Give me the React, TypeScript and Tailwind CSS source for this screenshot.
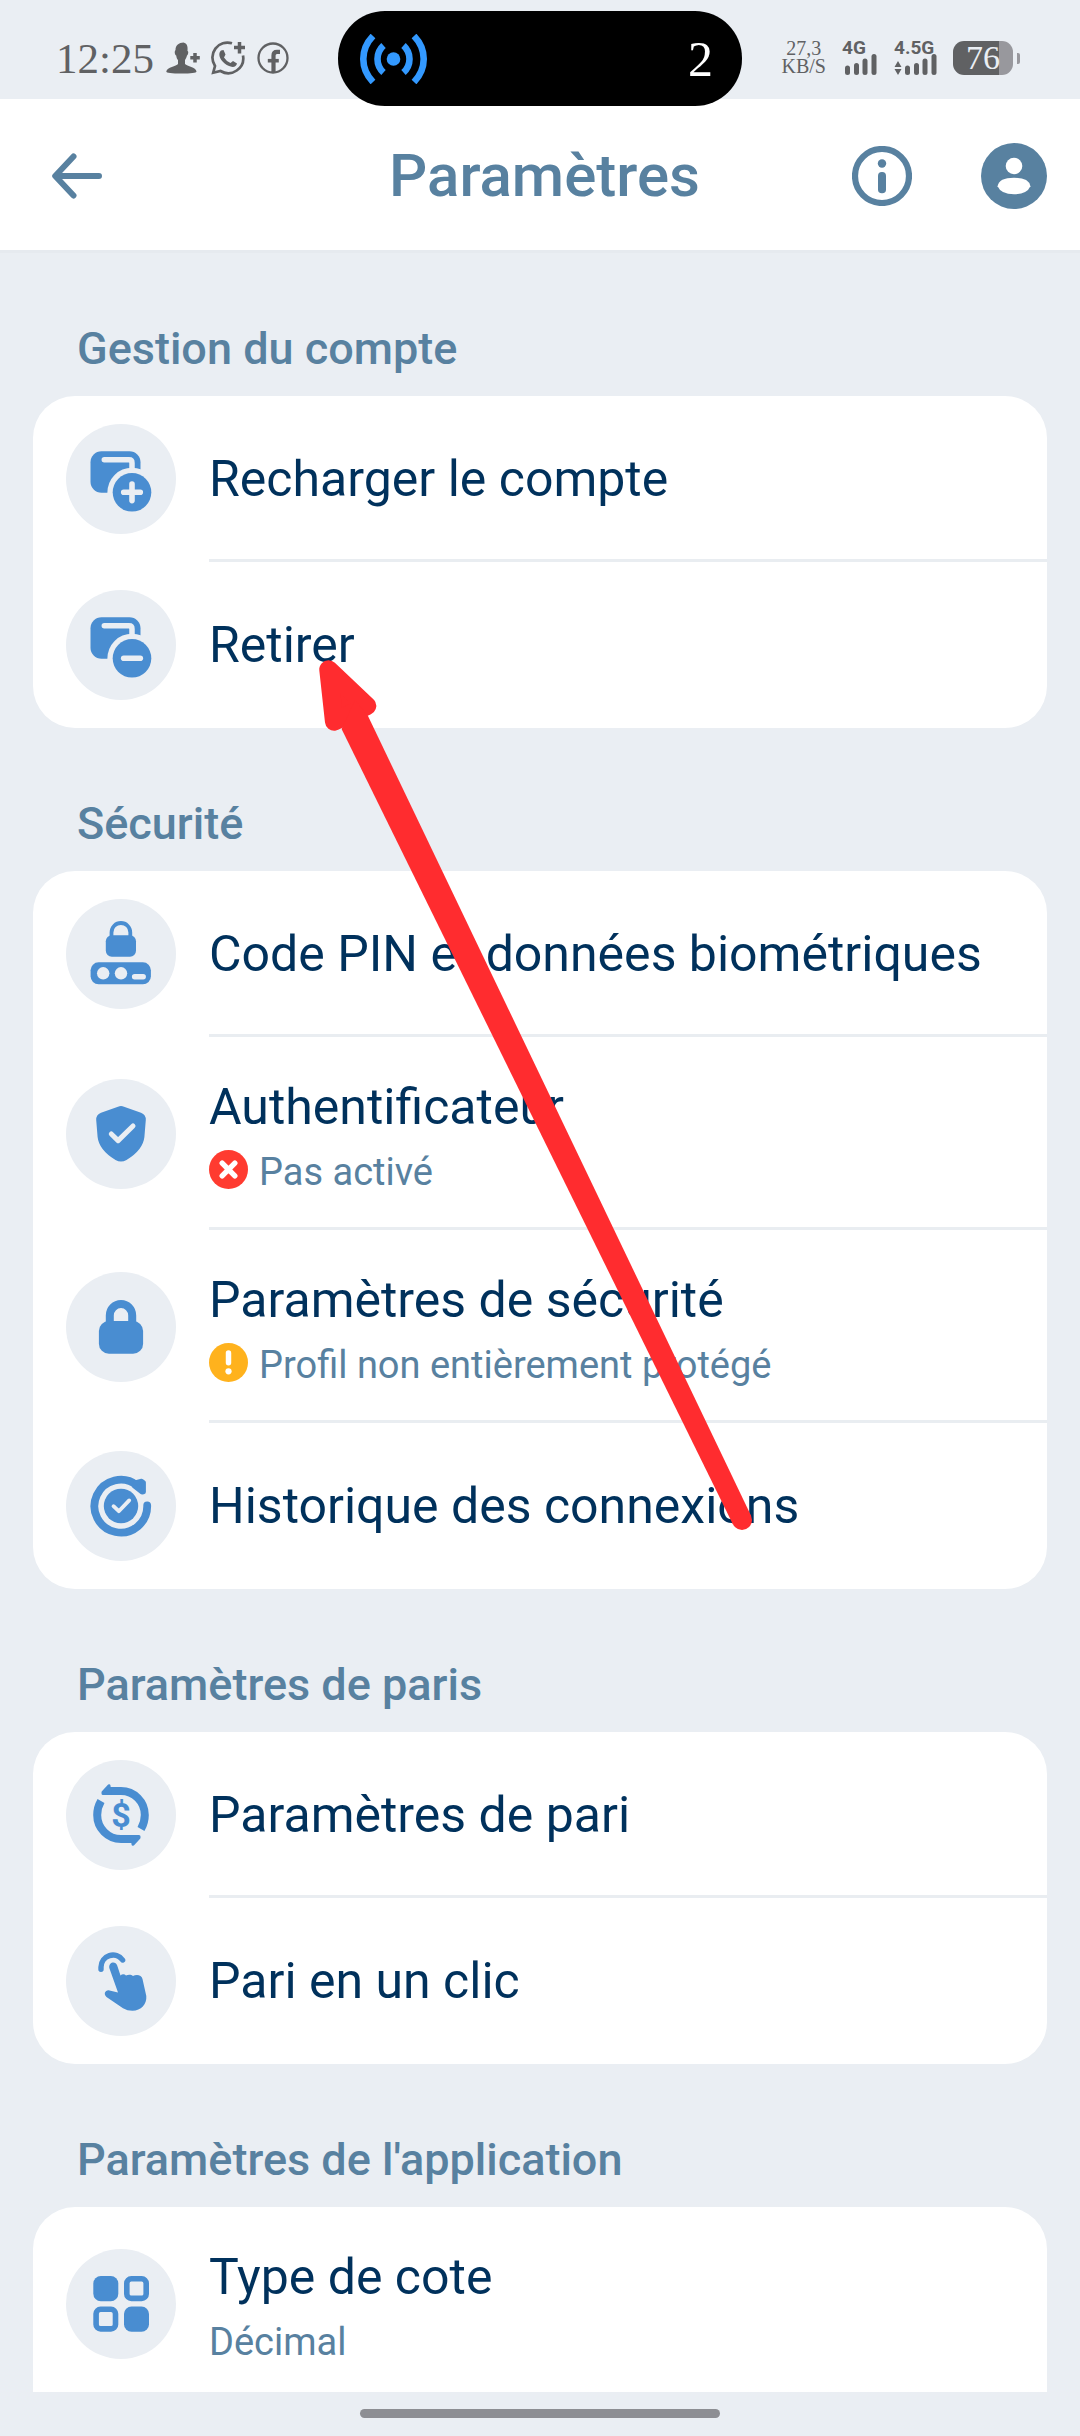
import type { ReactNode } from "react";

type Status = "error" | "warning";

type Item = {
  title: string;
  icon: ReactNode;
  subtitle?: string;
  status?: Status;
};

type Group = {
  heading: string;
  items: Item[];
  // the list goes on below the fold
  open?: boolean;
};

const BLUE = "#498dd1";
const DISC = "#eaeef3";

function WalletIcon({ minus = false }: { minus?: boolean }) {
  return (
    <svg viewBox="0 0 110 110" className="size-full" fill={BLUE}>
      <rect x="24.5" y="27.3" width="50" height="41.4" rx="11" />
      <path
        d="M38.3 35.8H63Q66 35.8 66 39V48"
        fill="none"
        stroke={DISC}
        strokeWidth="5.5"
        strokeLinecap="round"
      />
      <circle cx="66" cy="68.3" r="24.6" fill={DISC} />
      <circle cx="66" cy="68.3" r="19.3" />
      <path
        d={minus ? "M57.7 68.3H74.3" : "M57.7 68.3H74.3M66 60V76.6"}
        stroke={DISC}
        strokeWidth="5.6"
        strokeLinecap="round"
      />
    </svg>
  );
}

function PinIcon() {
  return (
    <svg viewBox="0 0 110 110" className="size-full" fill={BLUE}>
      <path d="M45.5 38V33.4A9.4 9.4 0 0 1 64.3 33.4V38" fill="none" stroke={BLUE} strokeWidth="3.8" />
      <rect x="39.8" y="36.3" width="30.2" height="21.4" rx="6" />
      <rect x="24.6" y="63.3" width="60.3" height="22" rx="8" />
      <g fill={DISC}>
        <circle cx="37.2" cy="74.3" r="6.2" />
        <circle cx="55" cy="74.3" r="6.2" />
        <rect x="65.9" y="75" width="14" height="5.4" rx="2.7" />
      </g>
    </svg>
  );
}

function ShieldIcon() {
  return (
    <svg viewBox="0 0 110 110" className="size-full" fill={BLUE}>
      <path d="M52 27.7Q55 26.4 58 27.7L75 33.8Q80 35.8 79.8 41L78.4 58Q77 71 60.5 81Q55 84.2 49.5 81Q33 71 31.6 58L30.2 41Q30 35.8 35 33.8Z" />
      <path
        d="M45.3 55L52.1 61.6L67 47"
        fill="none"
        stroke={DISC}
        strokeWidth="5"
        strokeLinecap="round"
        strokeLinejoin="round"
      />
    </svg>
  );
}

function LockIcon() {
  return (
    <svg viewBox="0 0 110 110" className="size-full" fill={BLUE}>
      <path d="M43.8 52V43.4A11.2 11.4 0 0 1 66.2 43.4V52" fill="none" stroke={BLUE} strokeWidth="8" />
      <rect x="32.9" y="49" width="44.2" height="32.8" rx="10" />
    </svg>
  );
}

function HistoryIcon() {
  return (
    <svg viewBox="0 0 110 110" className="size-full" fill={BLUE}>
      <path
        d="M81.2 54.5A26.4 26.4 0 1 1 71 34.3"
        fill="none"
        stroke={BLUE}
        strokeWidth="7.8"
        strokeLinecap="round"
      />
      <path
        d="M70 31.5L75.6 30L77.6 31.5V41L76 41.2L68 35Z"
        stroke={BLUE}
        strokeWidth="4.6"
        strokeLinejoin="round"
      />
      <circle cx="55" cy="55" r="17.2" />
      <path
        d="M47.5 55.2L52.8 60.2L63.2 49.4"
        fill="none"
        stroke={DISC}
        strokeWidth="3.8"
        strokeLinecap="round"
        strokeLinejoin="round"
      />
    </svg>
  );
}

function CoinIcon() {
  return (
    <svg viewBox="0 0 110 110" className="size-full" fill={BLUE}>
      {[0, 180].map((angle) => (
        <g key={angle} transform={`rotate(${angle} 55 55)`}>
          <path d="M40 31H55A23.8 24 0 0 1 78.8 55Q78.8 62.5 75 69" fill="none" stroke={BLUE} strokeWidth="8" />
          <path d="M43 25.8L37 32.2V33.5H44Z" stroke={BLUE} strokeWidth="3" strokeLinejoin="round" />
        </g>
      ))}
      <text
        x="55"
        y="66.5"
        textAnchor="middle"
        fontFamily="Roboto, sans-serif"
        fontSize="34"
        fontWeight="700"
      >
        $
      </text>
    </svg>
  );
}

function TapIcon() {
  return (
    <svg viewBox="0 0 110 110" className="size-full" fill={BLUE}>
      <path
        d="M35 43.3V41A12 12.3 0 0 1 56.6 34"
        fill="none"
        stroke={BLUE}
        strokeWidth="5.4"
        strokeLinecap="round"
      />
      <path d="M43.3 42C42.3 36 49.7 34.5 51.2 39.5L54.5 49.5C56 47.8 58.5 47.8 60 49.5C62 48.3 65.5 48.3 67 50C70 48.3 75.7 48.5 76.5 53L80.3 70C81 78 75 84.8 66.5 84.8C63 84.8 60 84 57 82.3L40.5 71C37 68 39.5 63.5 43.5 64.5L52 66.5Z" />
    </svg>
  );
}

function GridIcon() {
  return (
    <svg viewBox="0 0 110 110" className="size-full" fill={BLUE}>
      <rect x="27.3" y="27" width="25" height="25.2" rx="7.5" />
      <rect x="58" y="57.5" width="25" height="25.2" rx="7.5" />
      <g fill="none" stroke={BLUE} strokeWidth="5.6">
        <rect x="60.8" y="29.8" width="19.4" height="19.6" rx="4.5" />
        <rect x="30.1" y="60.3" width="19.4" height="19.6" rx="4.5" />
      </g>
    </svg>
  );
}

function StatusBadge({ status }: { status: Status }) {
  return (
    <svg viewBox="0 0 40 40" className="size-[39px] shrink-0">
      <circle cx="20" cy="20" r="20" fill={status === "error" ? "#ff3b30" : "#ffb21d"} />
      {status === "error" ? (
        <path
          d="M13.5 13.5L26.5 26.5M26.5 13.5L13.5 26.5"
          stroke="#fff"
          strokeWidth="5.5"
          strokeLinecap="round"
        />
      ) : (
        <g fill="#fff">
          <rect x="17.2" y="7.5" width="5.6" height="15.5" rx="2.8" />
          <circle cx="20" cy="29" r="3.2" />
        </g>
      )}
    </svg>
  );
}

const groups: Group[] = [
  {
    heading: "Gestion du compte",
    items: [
      { title: "Recharger le compte", icon: <WalletIcon /> },
      { title: "Retirer", icon: <WalletIcon minus /> },
    ],
  },
  {
    heading: "Sécurité",
    items: [
      { title: "Code PIN et données biométriques", icon: <PinIcon /> },
      { title: "Authentificateur", subtitle: "Pas activé", status: "error", icon: <ShieldIcon /> },
      {
        title: "Paramètres de sécurité",
        subtitle: "Profil non entièrement protégé",
        status: "warning",
        icon: <LockIcon />,
      },
      { title: "Historique des connexions", icon: <HistoryIcon /> },
    ],
  },
  {
    heading: "Paramètres de paris",
    items: [
      { title: "Paramètres de pari", icon: <CoinIcon /> },
      { title: "Pari en un clic", icon: <TapIcon /> },
    ],
  },
  {
    heading: "Paramètres de l'application",
    items: [{ title: "Type de cote", subtitle: "Décimal", icon: <GridIcon /> }],
    open: true,
  },
];

function Signal({ label, data = false }: { label: string; data?: boolean }) {
  return (
    <div className={data ? "relative h-[34px] w-[43px]" : "relative h-[34px] w-[35px]"}>
      <span className="absolute top-0 left-0 font-[Roboto,sans-serif] text-[19px] leading-[14px] font-bold">
        {label}
      </span>
      <svg viewBox="0 0 32 22" className="absolute right-0 bottom-0 h-[22px] w-[32px]" fill="currentColor">
        <rect x="0" y="12.5" width="5" height="9.5" rx="2.5" />
        <rect x="9" y="10" width="5" height="12" rx="2.5" />
        <rect x="17.5" y="5.5" width="5" height="16.5" rx="2.5" />
        <rect x="26.5" y="1" width="5" height="21" rx="2.5" />
      </svg>
      {data && (
        <svg viewBox="0 0 8 14" className="absolute bottom-0 left-0 h-[14px] w-[8px]" fill="currentColor">
          <path d="M4 0L7.5 6H.5ZM4 14L7.5 8H.5Z" />
        </svg>
      )}
    </div>
  );
}

function StatusBar() {
  return (
    <div className="relative flex h-[99px] shrink-0 items-center justify-between pt-[17px] pr-[60px] pl-[56px] font-['Liberation_Serif',serif] text-[#606163]">
      <div className="flex items-center">
        <span className="text-[43px] leading-[43px]">12:25</span>
        <svg viewBox="0 0 34 32" className="ml-[12px] h-[32px] w-[34px]" fill="currentColor">
          <path d="M9.5 8C9.5 3 13 .8 17.5 .5C21 1.5 22 4 21.5 9C23 9.5 22 13 21 13.5C20.5 16 19.5 17 19 18V22C21 24.5 30 25 30.5 29.5C30.5 31 25 31.5 15.5 31.5S0 31 .3 29.500C1 25 10.5 24.5 12 22V18C11 17 10.5 16 10.2 13.5C9 13 8 9.500 9.5 8Z" />
          <path d="M29 11V20.5M24.3 15.7H33.8" stroke="currentColor" strokeWidth="3.5" />
        </svg>
        <svg viewBox="0 0 34 34" className="ml-[11px] size-[34px]" fill="none" stroke="currentColor">
          <path d="M21 2.3A15 15 0 0 0 4 25L2.2 31.7L9.5 30A15 15 0 0 0 32 14.5" strokeWidth="2.7" />
          <path d="M28.5 1V12.5M23 6.5H34" strokeWidth="3.5" />
          <path
            d="M10 9.5L12.5 9L14.5 13.5L13 16.5Q15.5 20.5 19.5 22L22 20L26 22.5Q25 26.5 20.5 25.8C14 24.5 8 18 8.3 13Q8.5 10.5 10 9.5Z"
            fill="currentColor"
            stroke="none"
          />
        </svg>
        <svg viewBox="0 0 32 32" className="ml-[12px] size-[32px]" fill="none" stroke="currentColor">
          <circle cx="16" cy="16" r="14.5" strokeWidth="2.3" />
          <path d="M16.5 31V13.5Q16.5 9.8 20 9.8H23" strokeWidth="4.2" />
          <path d="M10.8 18.7H21.8" strokeWidth="3.6" />
        </svg>
      </div>

      <div className="flex items-center">
        <div className="flex flex-col items-center pb-[2px] text-[20px] leading-[18px]">
          <span>27,3</span>
          <span>KB/S</span>
        </div>
        <div className="ml-[16px]">
          <Signal label="4G" />
        </div>
        <div className="ml-[17px]">
          <Signal label="4.5G" data />
        </div>
        <div className="ml-[16px] flex items-center gap-[4px]">
          <div className="flex h-[34px] w-[60px] items-center justify-center rounded-[11px] bg-[linear-gradient(to_right,#606163_76%,#98989d_76%)] text-[34px] leading-[34px] text-[#eaeef3]">
            76
          </div>
          <div className="h-[11px] w-[3px] rounded-r-[2px] bg-[#98989d]" />
        </div>
      </div>

      {/* live activity pill */}
      <div className="absolute top-[11px] left-1/2 flex h-[95px] w-[404px] -translate-x-1/2 items-center justify-between rounded-[47px] bg-black pr-[29px] pl-[22px] text-white">
        <svg viewBox="0 0 67 50" className="h-[50px] w-[67px]" fill="none" stroke="#3399ff" strokeWidth="6.6">
          <circle cx="33.5" cy="25" r="6.8" fill="#3399ff" stroke="none" />
          <path d="M23.5 11.5Q17.5 17 17.5 25T23.5 38.5M43.5 11.5Q49.5 17 49.5 25T43.5 38.5" />
          <path d="M13 2Q3.3 12 3.3 25T13 48M54 2Q63.7 12 63.7 25T54 48" />
        </svg>
        <span className="text-[50px] leading-[50px]">2</span>
      </div>
    </div>
  );
}

function Header() {
  return (
    <header className="flex h-[154px] shrink-0 items-center border-b-[3px] border-[#e6eaef] bg-white pt-[3px] pr-[33px] pl-[42px] text-[#5881a0]">
      <div className="flex flex-1">
        <button type="button" aria-label="Retour" className="p-[10px]">
          <svg viewBox="0 0 50 46" className="h-[46px] w-[50px]" fill="none" stroke="currentColor">
            <path
              d="M47 23H3.5M21.5 3.5L3.2 23L21.5 42.5"
              strokeWidth="6"
              strokeLinecap="round"
              strokeLinejoin="round"
            />
          </svg>
        </button>
      </div>
      <h1 className="text-[60px] leading-[70px] font-medium">Paramètres</h1>
      <div className="flex flex-1 items-center justify-end gap-[69px]">
        <button type="button" aria-label="Informations">
          <svg viewBox="0 0 60 60" className="size-[60px]" fill="currentColor">
            <circle cx="30" cy="30" r="27" fill="none" stroke="currentColor" strokeWidth="6.2" />
            <circle cx="30" cy="17.5" r="4.2" />
            <rect x="26" y="26" width="8" height="21.3" rx="3.8" />
          </svg>
        </button>
        <button type="button" aria-label="Profil">
          <svg viewBox="0 0 66 66" className="size-[66px]">
            <circle cx="33" cy="33" r="33" fill="currentColor" />
            <circle cx="33" cy="23" r="8.3" fill="#fff" />
            <path d="M16.6 43.2Q18 34.8 33 34.8T49.4 43.2Q46 51.2 33 51.2T16.6 43.2Z" fill="#fff" />
          </svg>
        </button>
      </div>
    </header>
  );
}

function Row({ item, last }: { item: Item; last: boolean }) {
  return (
    <li className={item.subtitle ? "flex h-[193px]" : "flex h-[166px]"}>
      <button type="button" className="flex flex-1 items-stretch gap-[33px] pl-[33px] text-left">
        <span className="size-[110px] shrink-0 self-center rounded-full bg-[#eaeef3]">{item.icon}</span>
        <span
          className={
            last
              ? "flex flex-1 flex-col justify-center gap-[10px]"
              : "flex flex-1 flex-col justify-center gap-[10px] bg-[linear-gradient(#e9edf1,#e9edf1)] bg-[length:100%_3px] bg-bottom bg-no-repeat"
          }
        >
          <span className="text-[50px] leading-[66px] whitespace-nowrap text-[#00315c]">{item.title}</span>
          {item.subtitle && (
            <span className="flex items-start gap-[11px] text-[38px] leading-[44px] whitespace-nowrap text-[#5881a0]">
              {item.status && <StatusBadge status={item.status} />}
              {item.subtitle}
            </span>
          )}
        </span>
      </button>
    </li>
  );
}

export default function App() {
  return (
    <div className="relative flex h-screen flex-col overflow-hidden bg-[#eaeef3] font-[Roboto,sans-serif]">
      <StatusBar />
      <Header />

      <main className="min-h-0 flex-1 overflow-hidden px-[33px]">
        {groups.map((group) => (
          <section key={group.heading}>
            <h2 className="px-[44px] pt-[69px] pb-[20px] text-[45px] leading-[54px] font-medium text-[#5881a0]">
              {group.heading}
            </h2>
            <ul
              className={
                group.open
                  ? "overflow-hidden rounded-t-[42px] bg-white"
                  : "overflow-hidden rounded-[42px] bg-white"
              }
            >
              {group.items.map((item, i) => (
                <Row
                  key={item.title}
                  item={item}
                  last={i === group.items.length - 1}
                />
              ))}
            </ul>
          </section>
        ))}
      </main>

      <div className="flex h-[44px] shrink-0 items-center justify-center pb-[1px]">
        <div className="h-[9px] w-1/3 rounded-full bg-[#8d8e93]" />
      </div>

      {/* red pointer to the withdrawal row */}
      <svg
        viewBox="315 655 445 880"
        className="pointer-events-none absolute top-[655px] left-[315px] h-[880px] w-[445px]"
        fill="#ff2c2f"
      >
        <path
          d="M328.5 669.5L334.2 721.5L367 706Z"
          stroke="#ff2c2f"
          strokeWidth="18.5"
          strokeLinejoin="round"
        />
        <path d="M341.6 729L355 700L368 716L751.2 1516L733 1524.5Z" />
        <circle cx="742" cy="1520" r="10" />
      </svg>
    </div>
  );
}
